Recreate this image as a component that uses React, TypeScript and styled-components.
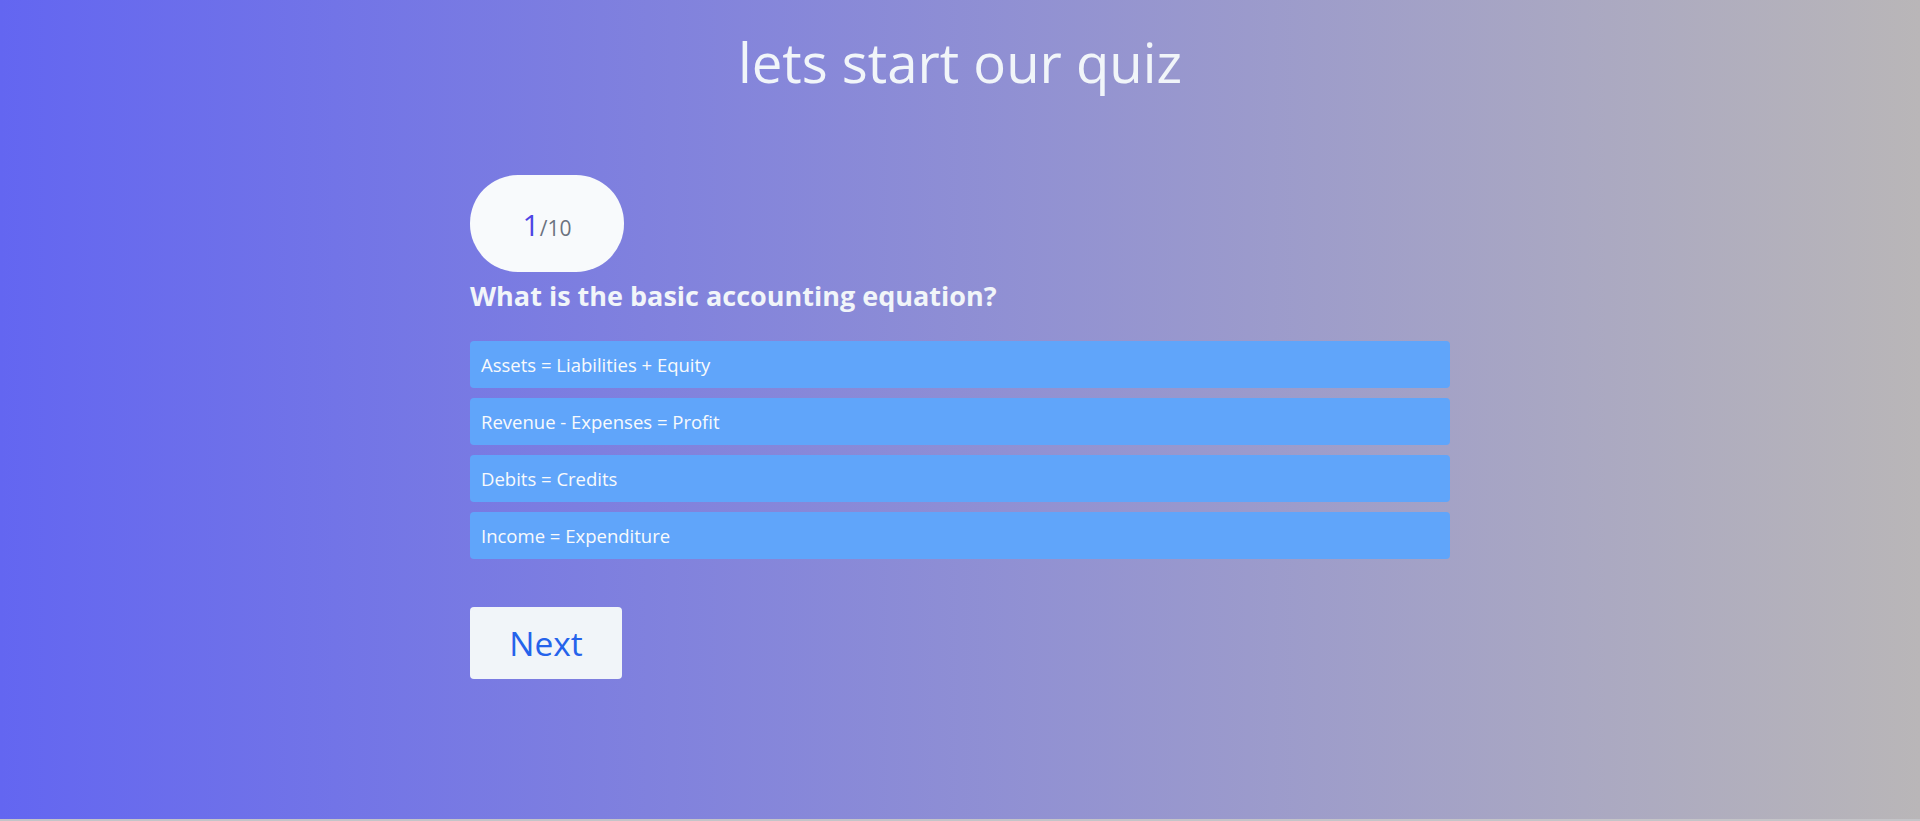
import React, { FC } from 'react';
import styled, { createGlobalStyle } from 'styled-components';

const GlobalStyle = createGlobalStyle`
  html, body {
    margin: 0;
    padding: 0;
    background: #c4c4c8;
  }

  * {
    box-sizing: border-box;
  }
`;

const Page = styled.main`
  background: linear-gradient(to right, #6366f1, #b9b6b8);
  color: #f1f5f9;
  font-family: 'Open Sans', 'Noto Sans', sans-serif;
  height: 819px;
  padding-top: 22px;
`;

const Title = styled.h1`
  font-size: 54.5px;
  font-weight: 400;
  line-height: 80px;
  margin: 0;
  text-align: center;
`;

const Quiz = styled.section`
  margin: 73px auto 0;
  width: 980px;
`;

const Counter = styled.div`
  align-items: baseline;
  background: #f8fafc;
  border-radius: 48px;
  display: inline-flex;
  height: 97px;
  justify-content: center;
  padding-top: 32px;
  width: 154px;

  .current {
    color: #4f46e5;
    font-size: 30px;
    line-height: 36px;
  }

  .total {
    color: #6b7280;
    font-size: 21px;
  }
`;

const Question = styled.h2`
  font-size: 27px;
  font-weight: 700;
  line-height: 36px;
  margin: 6px 0 27px;
`;

const Options = styled.ul`
  display: flex;
  flex-direction: column;
  gap: 10px;
  list-style: none;
  margin: 0;
  padding: 0;
`;

const Option = styled.li`
  align-items: center;
  background: #60a5fa;
  border-radius: 4px;
  color: #f8fafc;
  display: flex;
  font-size: 18.5px;
  height: 47px;
  padding: 0 11px;
`;

const NextButton = styled.button`
  background: #f1f5f9;
  border: none;
  border-radius: 4px;
  color: #2563eb;
  font-family: inherit;
  font-size: 33.5px;
  height: 72px;
  margin-top: 48px;
  padding: 0;
  width: 152px;
`;

const options = [
  'Assets = Liabilities + Equity',
  'Revenue - Expenses = Profit',
  'Debits = Credits',
  'Income = Expenditure',
];

const App: FC = () => {
  return (
    <>
      <GlobalStyle />
      <Page>
        <Title>lets start our quiz</Title>
        <Quiz>
          <Counter>
            <span className="current">1</span>
            <span className="total">/10</span>
          </Counter>
          <Question>What is the basic accounting equation?</Question>
          <Options>
            {options.map((option) => (
              <Option key={option}>{option}</Option>
            ))}
          </Options>
          <NextButton type="button">Next</NextButton>
        </Quiz>
      </Page>
    </>
  );
};

export default App;
